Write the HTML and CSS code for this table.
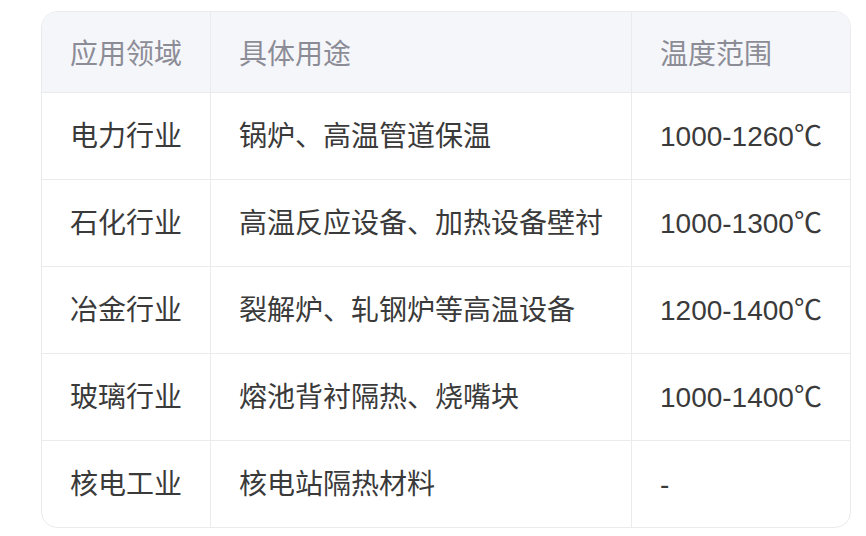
FILE: index.html
```html
<!DOCTYPE html>
<html lang="zh-CN">
<head>
<meta charset="utf-8">
<link rel="stylesheet" href="styles.css">
</head>
<body>
<div class="wrap">
  <table class="app-table">
    <thead>
      <tr><th class="c1">应用领域</th><th class="c2">具体用途</th><th class="c3">温度范围</th></tr>
    </thead>
    <tbody>
      <tr><td class="c1">电力行业</td><td class="c2">锅炉、高温管道保温</td><td class="c3">1000-1260℃</td></tr>
      <tr><td class="c1">石化行业</td><td class="c2">高温反应设备、加热设备壁衬</td><td class="c3">1000-1300℃</td></tr>
      <tr><td class="c1">冶金行业</td><td class="c2">裂解炉、轧钢炉等高温设备</td><td class="c3">1200-1400℃</td></tr>
      <tr><td class="c1">玻璃行业</td><td class="c2">熔池背衬隔热、烧嘴块</td><td class="c3">1000-1400℃</td></tr>
      <tr><td class="c1">核电工业</td><td class="c2">核电站隔热材料</td><td class="c3">-</td></tr>
    </tbody>
  </table>
</div>
</body>
</html>
```

FILE: styles.css
```css
html, body {
  margin: 0;
  padding: 0;
  background: #ffffff;
}
.wrap {
  padding: 11px 0 0 41px;
}
.app-table {
  width: 810px;
  border-collapse: separate;
  border-spacing: 0;
  border: 1px solid #ebebee;
  border-radius: 16px;
  overflow: hidden;
  table-layout: fixed;
  font-family: "Liberation Sans", "Noto Sans CJK SC", sans-serif;
  font-size: 28px;
  line-height: 42px;
}
.app-table th,
.app-table td {
  text-align: left;
  padding: 23px 0 21px 28px;
  border-right: 1px solid #ebebee;
  border-bottom: 1px solid #ebebee;
  white-space: nowrap;
  box-sizing: border-box;
}
.app-table th {
  font-weight: normal;
  color: #8c8c96;
  background: #f5f6fa;
  padding-top: 22px;
  padding-bottom: 16px;
  height: 81px;
}
.app-table td {
  color: #3a3a3a;
  height: 87px;
}
.app-table tbody tr:last-child td {
  border-bottom: none;
  height: 86px;
}
.app-table .c3 {
  border-right: none;
}
.app-table .c1 { width: 169px; }
.app-table .c2 { width: 421px; }
.app-table .c3 { width: 218px; }
```
